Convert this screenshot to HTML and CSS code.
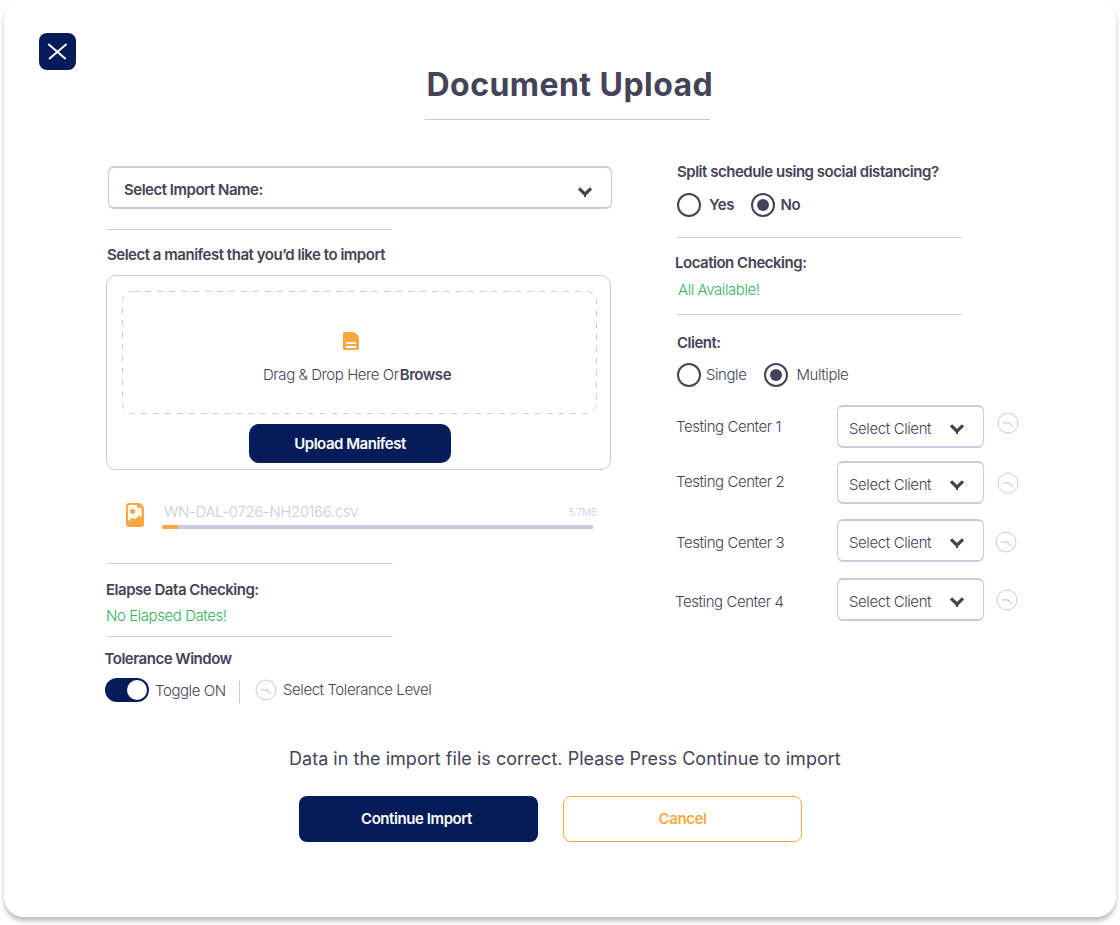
FILE: index.html
```html
<!DOCTYPE html>
<html lang="en">
<head>
<meta charset="utf-8">
<title>Document Upload</title>
<link rel="stylesheet" href="styles.css">
</head>
<body>
<svg class="sprite" aria-hidden="true">
  <symbol id="chevron" viewBox="0 0 16 12"><path d="M2 2.4 8 8.200 14 2.4" fill="none" stroke="#454357" stroke-width="3.2"/><path d="M7 8h2v3H7z" fill="#454357"/></symbol>
  <symbol id="clock" viewBox="0 0 22 22"><circle cx="11" cy="11" r="10" fill="none" stroke="#cbcbdb" stroke-width="1"/><path d="M6 10.800h6.600M12 10.800l3.800 4" fill="none" stroke="#cbcbdb" stroke-width="1.200"/></symbol>
</svg>
<main class="card">
  <header class="header">
    <button class="close" aria-label="Close"><svg width="21" height="18" viewBox="0 0 21 18"><path d="M1.800 1.500 18.200 15.500M19 1.500 2.600 15.500" fill="none" stroke="#fff" stroke-width="1.900" stroke-linecap="round"/></svg></button>
    <h1 class="title">Document Upload</h1>
  </header>

  <div class="columns">
    <section class="left">
      <div class="select select-import"><span class="strong">Select Import Name:</span><svg class="chevron"><use href="#chevron"/></svg></div>
      <hr class="rule rule-import">
      <p class="line strong manifest-label">Select a manifest that you’d like to import</p>
      <div class="upload">
        <div class="drop">
          <svg class="drop-outline" width="475" height="123"><rect x="0.5" y="0.5" width="474" height="122" rx="10" fill="none" stroke="#cbcbdb" stroke-dasharray="6 5.93" stroke-dashoffset="-1"/></svg>
          <svg class="doc" width="16" height="18" viewBox="0 0 16 18"><path d="M1.500 0H10c3.200.6 5.600 3.200 6 6v10.500A1.500 1.500 0 0 1 14.500 18h-13A1.500 1.500 0 0 1 0 16.500v-15A1.500 1.500 0 0 1 1.500 0z" fill="#faa942"/><path d="M3 10h10v2H3zM3 14h10v2H3z" fill="#fff"/></svg>
          <p class="drop-text"><span class="light">Drag &amp; Drop Here Or</span><span class="strong browse">Browse</span></p>
        </div>
        <button class="btn btn-upload strong">Upload Manifest</button>
      </div>
      <div class="file">
        <svg width="18" height="24" viewBox="0 0 18 24"><path d="M3 0h9.500A6 6 0 0 1 18 6v15a3 3 0 0 1-3 3H3a3 3 0 0 1-3-3V3a3 3 0 0 1 3-3z" fill="#faa942"/><path d="M3.500 2H10.800v2l1 1h3.700v9.500L13 12.300l-3.500 4L6.500 14.700 2 18V3.500A1.500 1.500 0 0 1 3.500 2z" fill="#fff"/><circle cx="6.600" cy="8.300" r="2.600" fill="#faa942"/></svg>
        <div class="file-body">
          <div class="file-info"><span class="light">WN-DAL-0726-NH20166.csv</span><span class="size">5.7MB</span></div>
          <div class="progress"><div class="bar"></div></div>
        </div>
      </div>
      <hr class="rule rule-elapse">
      <p class="line strong elapse">Elapse Data Checking:</p>
      <p class="line light ok elapse-ok">No Elapsed Dates!</p>
      <hr class="rule rule-tolerance">
      <p class="line strong tolerance">Tolerance Window</p>
      <div class="tolerance-row">
        <span class="toggle"><span class="knob"></span></span>
        <span class="light toggle-text">Toggle ON</span>
        <span class="divider"></span>
        <svg class="clock"><use href="#clock"/></svg>
        <span class="light level">Select Tolerance Level</span>
      </div>
    </section>

    <section class="right">
      <p class="line strong split">Split schedule using social distancing?</p>
      <div class="radios">
        <span class="radio"></span><span class="strong yes">Yes</span>
        <span class="radio on"></span><span class="strong no">No</span>
      </div>
      <hr class="rule rule-location">
      <p class="line strong location">Location Checking:</p>
      <p class="line light ok location-ok">All Available!</p>
      <hr class="rule rule-client">
      <p class="line strong client">Client:</p>
      <div class="radios radios-client">
        <span class="radio"></span><span class="light single">Single</span>
        <span class="radio on"></span><span class="light multiple">Multiple</span>
      </div>
      <div class="center c1"><span class="light name">Testing Center 1</span><div class="select"><span class="light">Select Client</span><svg class="chevron"><use href="#chevron"/></svg></div><svg class="clock"><use href="#clock"/></svg></div>
      <div class="center c2"><span class="light name">Testing Center 2</span><div class="select"><span class="light">Select Client</span><svg class="chevron"><use href="#chevron"/></svg></div><svg class="clock"><use href="#clock"/></svg></div>
      <div class="center c3"><span class="light name">Testing Center 3</span><div class="select"><span class="light">Select Client</span><svg class="chevron"><use href="#chevron"/></svg></div><svg class="clock"><use href="#clock"/></svg></div>
      <div class="center c4"><span class="light name">Testing Center 4</span><div class="select"><span class="light">Select Client</span><svg class="chevron"><use href="#chevron"/></svg></div><svg class="clock"><use href="#clock"/></svg></div>
    </section>
  </div>

  <footer class="footer">
    <p class="message">Data in the import file is correct. Please Press Continue to import</p>
    <div class="actions">
      <button class="btn strong">Continue Import</button>
      <button class="btn btn-cancel strong">Cancel</button>
    </div>
  </footer>
</main>
</body>
</html>
```
FILE: styles.css
```css
* { box-sizing: border-box; }
body { margin: 0; height: 925px; overflow: hidden; background: #fff; color: #454357; font: 15px/20px Inter, sans-serif; }
p, h1, hr { margin: 0; }
button { font: inherit; padding: 0; border: 0; }
svg { display: block; flex: none; }
.sprite { position: absolute; width: 0; height: 0; }

.card { width: 1112px; height: 917px; margin: 0 auto; background: #fff; border-radius: 20px; box-shadow: 0 4px 4px rgba(0, 0, 0, .25); display: flex; flex-direction: column; }

.strong { font-weight: 600; letter-spacing: -.48px; white-space: nowrap; }
.light { font-weight: 300; letter-spacing: -.43px; white-space: nowrap; }
.ok { color: #34b25a; }
.rule { width: 285px; height: 1px; border: 0; background: #cbcbdb; }

.header { height: 162px; padding: 33px 0 0 35px; display: flex; align-items: flex-start; }
.close { width: 37px; height: 37px; border-radius: 8px; background: #061c58; display: flex; align-items: center; justify-content: center; }
.title { width: 285px; height: 55px; margin: 32px 0 0 349px; border-bottom: 1px solid #cbcbdb; font-size: 32px; line-height: 40px; font-weight: 700; letter-spacing: .45px; text-indent: 1.5px; white-space: nowrap; }

.columns { height: 587px; display: flex; }
.left { width: 672px; padding: 4px 0 0 101px; }
.right { width: 400px; }

.select { height: 43px; border: 2px solid #cbcbdb; border-width: 2px 1.5px; border-radius: 6px; display: flex; align-items: center; justify-content: space-between; }
.chevron { width: 16px; height: 12px; }
.select-import { width: 504px; margin-left: 3px; padding: 4px 18px 0 15px; }
.select-import .chevron { margin-top: 5px; }
.rule-import { margin: 20px 0 0 2px; }
.manifest-label { margin: 15px 0 0 2px; }

.upload { width: 505px; height: 195px; margin: 10px 0 0 1px; border: 1px solid #cbcbdb; border-radius: 10px; padding-top: 15px; display: flex; flex-direction: column; align-items: center; }
.drop { position: relative; width: 475px; height: 123px; margin-left: 2px; padding-top: 41px; }
.drop-outline { position: absolute; inset: 0; }
.doc { margin-left: 221px; }
.drop-text { margin: 15px 0 0 141px; display: flex; }
.browse { letter-spacing: -.48px; margin-left: 1px; }
.btn { width: 239px; height: 46px; border-radius: 8px; background: #061c58; color: #fff; }
.btn-upload { width: 202px; height: 39px; margin: 10px 17px 0 0; border-radius: 10px; }

.file { height: 28px; margin: 32px 0 0 21px; padding-top: 1px; display: flex; }
.file-body { width: 434px; margin-left: 18px; margin-top: -1px; }
.file-info { height: 23px; padding-left: 2px; display: flex; justify-content: space-between; color: #cbcbdb; }
.file-info .light { letter-spacing: -.4px; }
.size { margin-right: -1px; font-size: 10px; font-weight: 300; letter-spacing: -.2px; }
.progress { width: 431px; height: 4px; border-radius: 2px 0 0 2px; background: #cbcbdb; }
.bar { width: 16px; height: 4px; border-radius: 2px 0 0 2px; background: #faa942; }

.rule-elapse { margin: 33px 0 0 2px; }
.elapse { margin: 16px 0 0 1px; }
.elapse-ok { margin: 6px 0 0 1px; }
.rule-tolerance { margin: 10px 0 0 2px; }
.tolerance { margin-top: 12px; margin-left: -.5px; }
.tolerance-row { height: 24px; margin-top: 9px; display: flex; align-items: center; }
.toggle { width: 44px; height: 24px; padding: 2px; border-radius: 12px; background: #061c58; display: flex; justify-content: flex-end; }
.knob { width: 20px; height: 20px; border-radius: 50%; background: #fff; }
.toggle-text { width: 70px; margin: 2px 0 0 6px; }
.divider { width: 1px; height: 22px; margin: 3px 0 0 14px; background: #cbcbdb; }
.clock { width: 22px; height: 22px; }
.tolerance-row .clock { margin-left: 15px; }
.level { margin-left: 6px; }

.radios { height: 24px; margin-top: 11px; display: flex; align-items: center; }
.radio { width: 24px; height: 24px; flex: none; border: 2px solid #454357; border-radius: 50%; display: flex; align-items: center; justify-content: center; }
.on::after { content: ""; width: 12px; height: 12px; border-radius: 50%; background: #454357; }
.right .rule, .radios { margin-left: 1px; }
.split { padding-left: 1px; }
.yes { width: 42px; margin-left: 8px; }
.no { margin-left: 5.5px; }
.right .rule-location { margin-top: 20px; }
.location { margin: 15px 0 0 -1px; }
.location-ok { margin: 7px 0 0 2px; }
.right .rule-client { margin-top: 14px; }
.client { margin: 18px 0 0 1px; }
.radios-client { margin-top: 10px; }
.single { width: 58px; margin-left: 5px; }
.multiple { margin-left: 8.5px; }

.center { height: 43px; display: flex; align-items: center; }
.center .name { width: 161px; }
.center .select { width: 147px; padding: 5px 18px 0 11px; }
.center .select > .light { letter-spacing: -.4px; }
.center .select .chevron { margin-bottom: 1px; }
.center .clock { margin-left: 13px; }
.c1 { margin-top: 18px; }
.c2 { margin-top: 13px; }
.c3 { margin-top: 15px; }
.c4 { margin-top: 16px; }
.c1 .clock { margin-bottom: 7px; }
.c2 .name { margin-bottom: 1px; }
.c2 .clock { margin-top: 1px; }
.c3 .name, .c4 .name { padding-top: 5px; }
.c3 .clock { margin: 3px 0 0 11px; }
.c4 .clock { margin: 1px 0 0 12px; }
.c4 .name { width: 162px; margin-left: -1px; }

.footer { padding-left: 284px; }
.message { padding-left: 1px; font-size: 18px; letter-spacing: .025px; white-space: nowrap; }
.actions { margin: 27px 0 0 11px; display: flex; gap: 25px; }
.actions .strong { letter-spacing: -.42px; }
.actions .btn { padding-right: 4px; }
.actions .btn-cancel { padding-right: 0; background: #fff; border: 1px solid #faa942; color: #faa942; }
```
